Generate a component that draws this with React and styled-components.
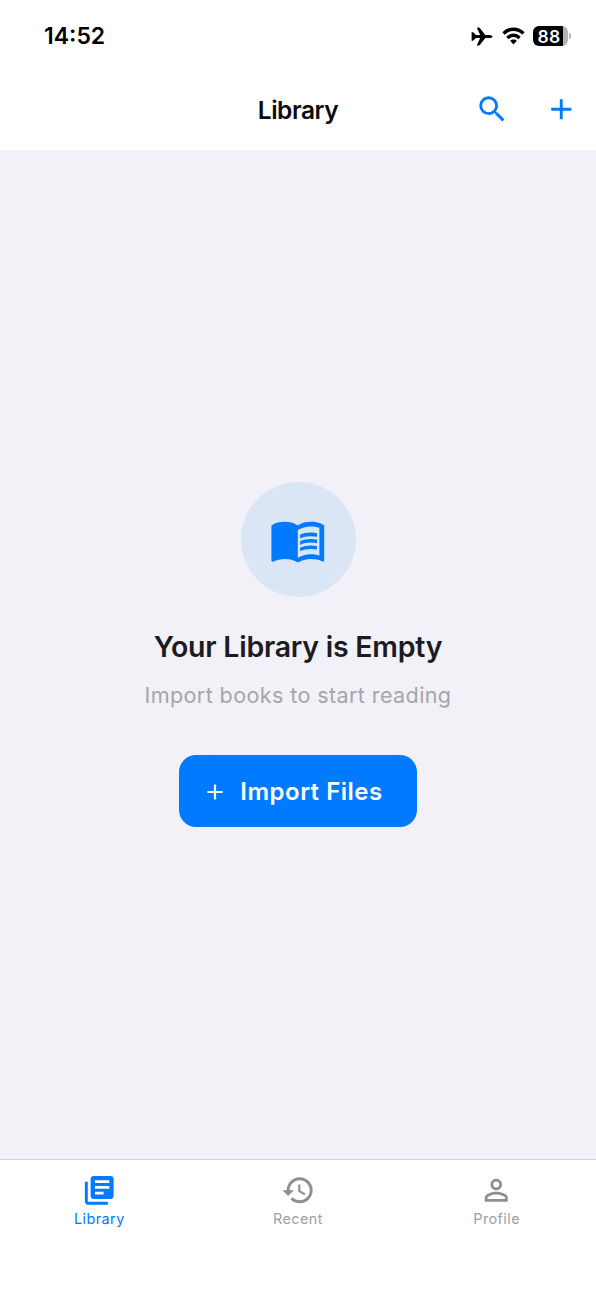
import React from "react";
import { useState } from "react";
import styled, { createGlobalStyle } from "styled-components";
import { MdSearch, MdAdd, MdMenuBook, MdLibraryBooks, MdHistory, MdPersonOutline } from "react-icons/md";

const GlobalStyle = createGlobalStyle`
    * {
        box-sizing: border-box;
    }
    body {
        margin: 0;
        font-family: Inter, "Liberation Sans", sans-serif;
    }
    button {
        border: none;
        background: none;
        padding: 0;
        font-family: inherit;
        cursor: pointer;
    }
    svg {
        display: block;
    }
`;

const Screen = styled.div`
    display: flex;
    flex-direction: column;
    width: 100%;
    height: 100vh;
    background-color: #f2f1f8;
`;

const StatusBar = styled.div`
    display: flex;
    align-items: center;
    justify-content: space-between;
    height: 70px;
    padding: 2px 25px 0px 44px;
    background-color: #ffffff;
`;

const Time = styled.div`
    font-size: 23px;
    font-weight: 600;
    color: #000000;
`;

const StatusIcons = styled.div`
    display: flex;
    align-items: center;
`;

const Airplane = styled.svg`
    width: 22px;
    height: 19px;
`;

const Wifi = styled.svg`
    width: 23px;
    height: 18px;
    margin: 0px 8px 0px 9px;
`;

const Battery = styled.div`
    display: flex;
    align-items: center;
    justify-content: center;
    width: 35px;
    height: 20px;
    padding-right: 3px;
    border-radius: 6px;
    background: linear-gradient(to right, #000000 30px, #b4b4b4 30px);
    font-size: 17.5px;
    font-weight: 600;
    letter-spacing: 0.4px;
    color: #ffffff;
`;

const BatteryTip = styled.div`
    width: 2px;
    height: 6px;
    margin-left: 1px;
    border-radius: 0px 3px 3px 0px;
    background-color: #b4b4b4;
`;

const Header = styled.div`
    display: grid;
    grid-template-columns: 1fr auto 1fr;
    align-items: center;
    height: 80px;
    background-color: #ffffff;
`;

const HeaderTitle = styled.div`
    grid-column: 2;
    font-size: 24.5px;
    font-weight: 600;
    letter-spacing: -0.45px;
    color: #0b0b0d;
`;

const HeaderActions = styled.div`
    display: flex;
    justify-content: flex-end;
    gap: 34px;
    padding: 0px 18px 2px 0px;
    color: #007aff;
`;

const IconButton = styled.button`
    color: inherit;
`;

const Content = styled.div`
    display: flex;
    flex: 1;
    flex-direction: column;
    align-items: center;
    justify-content: center;
`;

const BookCircle = styled.div`
    display: flex;
    align-items: center;
    justify-content: center;
    width: 115px;
    height: 115px;
    border-radius: 50%;
    background-color: #dae5f6;
    color: #007aff;
`;

const EmptyTitle = styled.div`
    margin-top: 32px;
    font-size: 28.5px;
    font-weight: 600;
    line-height: 36px;
    letter-spacing: -0.25px;
    color: #1b1b21;
`;

const EmptyText = styled.div`
    margin-top: 15px;
    font-size: 21.6px;
    line-height: 30px;
    letter-spacing: 0.37px;
    color: #a6a6aa;
`;

const ImportButton = styled.button`
    display: flex;
    align-items: center;
    justify-content: center;
    gap: 12px;
    width: 238px;
    height: 72px;
    margin-top: 45px;
    padding: 1px 11px 0px 0px;
    border-radius: 17px;
    background-color: #007aff;
    font-size: 24px;
    font-weight: 600;
    letter-spacing: 0.5px;
    color: #ffffff;
`;

const TabBar = styled.div`
    display: grid;
    grid-template-columns: repeat(3, 1fr);
    height: 131px;
    border-top: 1px solid #d4d4d8;
    background-color: #ffffff;
`;

const Tab = styled.button`
    display: flex;
    flex-direction: column;
    align-items: center;
    padding-top: 13px;
    color: ${props => (props.$active ? "#007aff" : "#8e8e93")};
`;

const TabLabel = styled.div`
    margin-top: 2px;
    font-size: 14.4px;
    line-height: 18px;
    letter-spacing: 0.45px;
    color: ${props => (props.$active ? "#007aff" : "#a0a0a4")};
`;

const tabs = [
    { name: 'Library', icon: MdLibraryBooks },
    { name: 'Recent', icon: MdHistory },
    { name: 'Profile', icon: MdPersonOutline },
];

export function Library() {
    const [selectedTab, setSelectedTab] = useState('Library');

    return (
        <Screen>
            <StatusBar>
                <Time>14:52</Time>
                <StatusIcons>
                    <Airplane viewBox="0 0 22 20" preserveAspectRatio="none" fill="#000000">
                        <path d="M0.6 5.6h1.2c.4 0 .7.1.9.4L4.8 8.3h4.4L6.1 1.4C5.9.9 6.1.5 6.6.5h1.2c.4 0 .8.2 1 .5l5.5 7.3h4.2c1.6 0 3 .8 3 1.7s-1.4 1.7-3 1.7h-4.2L8.8 19c-.2.3-.6.5-1 .5H6.6c-.5 0-.7-.4-.5-.9l3.1-6.9H4.8L2.7 14c-.2.3-.5.4-.9.4H.6V5.6z" />
                    </Airplane>
                    <Wifi viewBox="0 0 24 18" preserveAspectRatio="none" fill="none" stroke="#000000" strokeWidth="3.5">
                        <path d="M1.6 6.4a15 15 0 0 1 20.8 0" />
                        <path d="M5.7 10.9a9 9 0 0 1 12.6 0" />
                        <path d="M12 12.4c-1.4 0-2.6.5-3.5 1.3L12 17.4l3.5-3.7c-.9-.8-2.1-1.3-3.5-1.3z" fill="#000000" stroke="none" />
                    </Wifi>
                    <Battery>88</Battery>
                    <BatteryTip />
                </StatusIcons>
            </StatusBar>

            <Header>
                <HeaderTitle>Library</HeaderTitle>
                <HeaderActions>
                    <IconButton aria-label="Search"><MdSearch size={34.5} /></IconButton>
                    <IconButton aria-label="Add"><MdAdd size={34.5} /></IconButton>
                </HeaderActions>
            </Header>

            <Content>
                <BookCircle>
                    <MdMenuBook size={57.6} />
                </BookCircle>
                <EmptyTitle>Your Library is Empty</EmptyTitle>
                <EmptyText>Import books to start reading</EmptyText>
                <ImportButton>
                    <MdAdd size={26} />
                    Import Files
                </ImportButton>
            </Content>

            <TabBar>
                {tabs.map(({ name, icon: Icon }) => (
                    <Tab key={name} $active={selectedTab === name} onClick={() => setSelectedTab(name)}>
                        <Icon size={34.5} />
                        <TabLabel $active={selectedTab === name}>{name}</TabLabel>
                    </Tab>
                ))}
            </TabBar>
        </Screen>
    );
}

function App() {
    return (
        <>
            <GlobalStyle />
            <Library />
        </>
    );
}

export default App
